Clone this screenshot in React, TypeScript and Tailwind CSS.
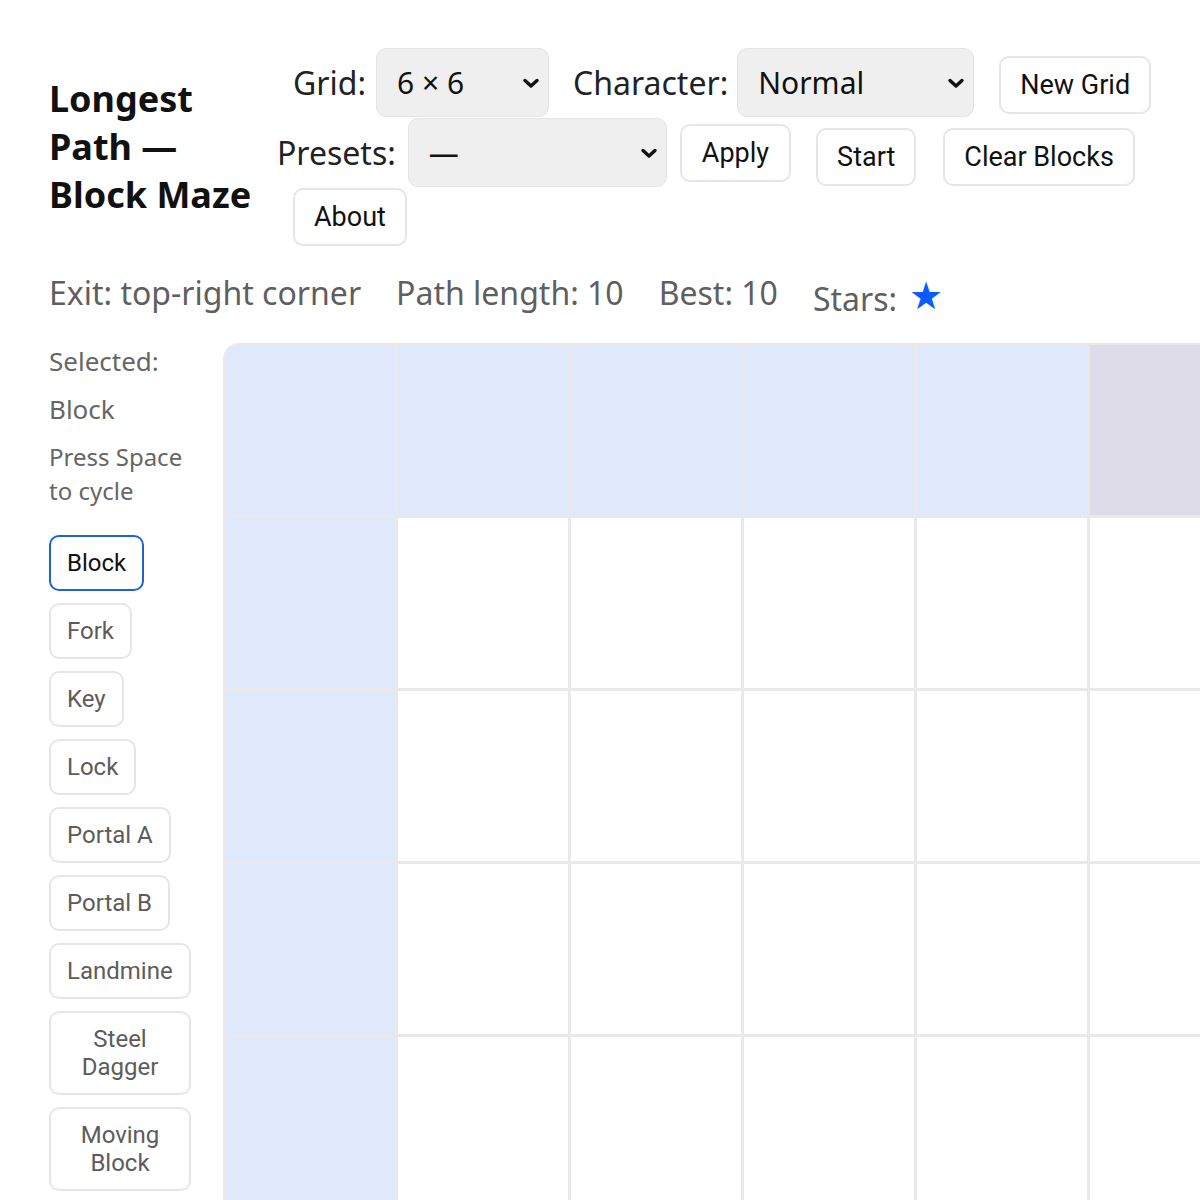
import React from "react";

const SANS = "font-['Noto_Sans',sans-serif]";
const UI = "font-['Roboto','Noto_Sans',sans-serif]";

function Chevron() {
  return (
    <svg
      className="pointer-events-none absolute right-[9px] top-1/2 -translate-y-1/2"
      width="18"
      height="12"
      viewBox="0 0 18 12"
      fill="none"
    >
      <path d="M3 3.5 L9 9 L15 3.5" stroke="#111" strokeWidth="3.4" strokeLinecap="round" strokeLinejoin="round" />
    </svg>
  );
}

function Select({ value, options, width }: { value: string; options: string[]; width: string }) {
  return (
    <div className={`relative ${width} h-[69px]`}>
      <select
        defaultValue={value}
        className={`${SANS} h-full w-full appearance-none rounded-[10px] border border-[#e4e4e4] bg-[#efefef] pl-[20px] pr-[40px] text-[30px] text-[#111] outline-none`}
      >
        {options.map((o) => (
          <option key={o}>{o}</option>
        ))}
      </select>
      <Chevron />
    </div>
  );
}

function Btn({ children, className = "" }: { children: React.ReactNode; className?: string }) {
  return (
    <button
      className={`${UI} h-[58px] rounded-[10px] border-2 border-[#e6e6e6] bg-white px-[19px] text-[27px] leading-[30px] text-[#111] ${className}`}
    >
      {children}
    </button>
  );
}

const TOOLS = ["Block", "Fork", "Key", "Lock", "Portal A", "Portal B", "Landmine", "Steel Dagger", "Moving Block"];

type Cell = "path" | "exit" | "empty";

const N = 6;
const cells: Cell[] = [];
for (let r = 0; r < N; r++) {
  for (let c = 0; c < N; c++) {
    if (r === 0 && c === N - 1) cells.push("exit");
    else if (r === 0 || c === 0) cells.push("path");
    else cells.push("empty");
  }
}

const cellBg: Record<Cell, string> = {
  path: "bg-[#dfe9fb]",
  exit: "bg-[#dfdcea]",
  empty: "bg-white",
};

export default function App() {
  return (
    <div className={`${SANS} relative h-[1200px] w-[1200px] overflow-hidden bg-white`}>
      <div className="pl-[49px] pt-[48px]">
        {/* header: title + controls */}
        <div className="flex items-center">
          <h1 className="w-[229px] shrink-0 pr-[16px] text-[36px] font-bold leading-[48px] text-[#111]">
            Longest Path — Block Maze
          </h1>
          <div className="-ml-[1px] flex flex-col gap-[1px]">
            <div className="flex items-start">
              <label className="ml-[16px] flex h-[69px] items-center gap-[10px] text-[32px] text-[#222]">
                Grid:
                <Select value="6 × 6" options={["5 × 5", "6 × 6", "7 × 7", "8 × 8"]} width="w-[173px]" />
              </label>
              <label className="ml-[24px] flex h-[69px] items-center gap-[9px] text-[32px] text-[#222]">
                Character:
                <Select value="Normal" options={["Normal", "Heavy", "Swift"]} width="w-[237px]" />
              </label>
              <Btn className="ml-[25px] mt-[8px]">New Grid</Btn>
            </div>
            <div className="flex items-start">
              <label className="flex h-[69px] items-center gap-[12px] text-[32px] text-[#222]">
                Presets:
                <Select value="—" options={["—", "Spiral", "Zigzag", "Comb"]} width="w-[259px]" />
              </label>
              <Btn className="ml-[13px] mt-[6px] px-[20px]">Apply</Btn>
              <Btn className="ml-[25px] mt-[10px]">Start</Btn>
              <Btn className="ml-[27px] mt-[10px]">Clear Blocks</Btn>
            </div>
            <div className="flex">
              <Btn className="ml-[16px] h-[57px]">About</Btn>
            </div>
          </div>
        </div>

        {/* status line */}
        <div className="mt-[24px] flex items-start gap-[35px] text-[32px] leading-[45px] text-[#5f5f5f]">
          <span>Exit: top-right corner</span>
          <span>Path length: 10</span>
          <span>Best: 10</span>
          <span className="flex translate-y-[6px] items-center gap-[12px]">
            Stars:
            <span className="-translate-y-[5px] text-[38px] leading-none text-[#0b5cff]">★</span>
          </span>
        </div>

        {/* tool palette + board */}
        <div className="mt-[28px] flex items-start gap-[32px]">
          <aside className="w-[142px] shrink-0 text-[#666]">
            <p className="text-[26px] leading-[36px]">Selected:</p>
            <p className="mt-[12px] text-[26px] leading-[36px]">Block</p>
            <p className="mt-[13px] text-[24px] leading-[34px]">Press Space to cycle</p>
            <div className="mt-[27px] flex flex-col items-start gap-[12px]">
              {TOOLS.map((t, i) => (
                <button
                  key={t}
                  className={`${UI} max-w-full rounded-[10px] border-2 bg-white px-[16px] py-[12px] text-center text-[24px] leading-[28px] ${
                    i === 0 ? "border-[#1c63d8] text-[#111]" : "border-[#e6e6e6] text-[#5c5c5c]"
                  }`}
                >
                  {t}
                </button>
              ))}
            </div>
          </aside>

          <div className="shrink-0 rounded-tl-[16px] bg-[#e9e9ec] p-[2px]">
            <div className="grid grid-cols-[repeat(6,170px)] gap-[3px]">
              {cells.map((c, i) => (
                <div
                  key={i}
                  className={`h-[170px] w-[170px] ${cellBg[c]} ${i === 0 ? "rounded-tl-[14px]" : ""}`}
                />
              ))}
            </div>
          </div>
        </div>
      </div>
    </div>
  );
}
